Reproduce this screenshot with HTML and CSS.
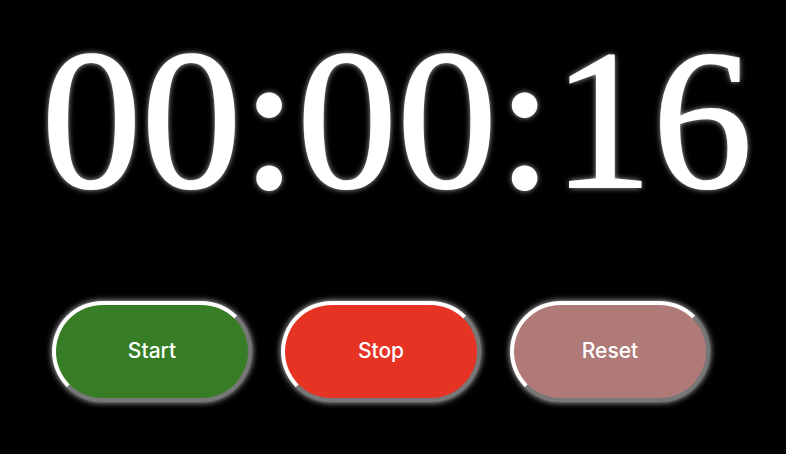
FILE: index.html
```html
<!DOCTYPE html>
<html>
<head>
<meta charset="utf-8">
<link rel="stylesheet" href="styles.css">
</head>
<body>
<main class="app">
  <div class="timer">00:00:16</div>
  <div class="controls">
    <button class="btn btn-start">Start</button>
    <button class="btn btn-stop">Stop</button>
    <button class="btn btn-reset">Reset</button>
  </div>
</main>
</body>
</html>
```
FILE: styles.css
```css
html, body {
  margin: 0;
  background: #000;
  height: 100%;
  overflow: hidden;
}
.app {
  display: flex;
  flex-direction: column;
}
.timer {
  font-family: "Liberation Serif", "Times New Roman", serif;
  font-size: 200px;
  line-height: 230px;
  color: #fff;
  text-align: center;
  padding-left: 8px;
  margin-top: 5px;
  -webkit-text-stroke: 2px #fff;
  text-shadow: 0 0 6px rgba(255,255,255,0.9);
}
.controls {
  display: flex;
  gap: 29px;
  padding-left: 52px;
  margin-top: 66px;
}
.btn {
  width: 200px;
  height: 101px;
  border-radius: 51px;
  border: 4px solid;
  border-color: #fff #777 #777 #fff;
  box-shadow: 0 0 6px rgba(255,255,255,0.8);
  color: #fff;
  font-family: Inter, "Noto Sans", sans-serif;
  font-size: 21px;
  font-weight: 500;
  padding: 0 0 2px;
}
.btn-start { background: #367d26; }
.btn-stop { background: #e63323; }
.btn-reset { background: #b07a78; }
```
